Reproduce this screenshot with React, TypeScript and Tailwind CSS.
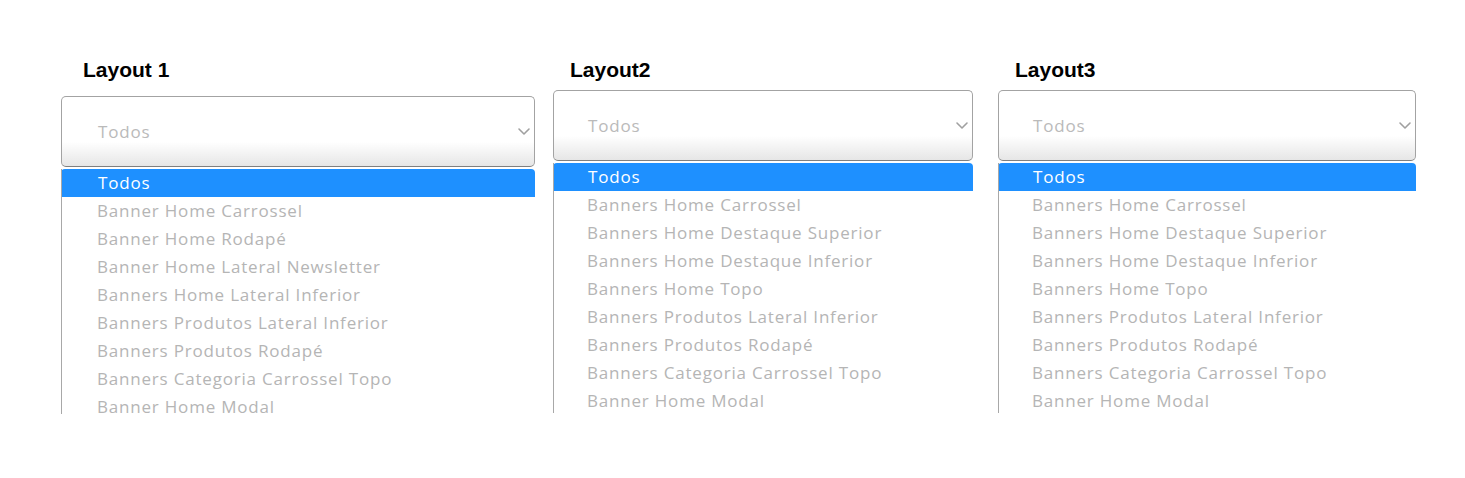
import React from "react";

const poppins = { fontFamily: '"Open Sans", "Noto Sans", sans-serif' };

type Col = {
  label: string;
  width: string;
  labelPad: string;
  boxTop: string;
  pad: string;
  items: string[];
  listH: string;
  mark?: boolean;
};

const columns: Col[] = [
  {
    label: "Layout 1",
    width: "w-[474px]",
    labelPad: "pl-[22px]",
    boxTop: "mt-[14px]",
    pad: "pl-[36px]",
    listH: "h-[245px]",
    mark: true,
    items: [
      "Banner Home Carrossel",
      "Banner Home Rodapé",
      "Banner Home Lateral Newsletter",
      "Banners Home Lateral Inferior",
      "Banners Produtos Lateral Inferior",
      "Banners Produtos Rodapé",
      "Banners Categoria Carrossel Topo",
      "Banner Home Modal",
    ],
  },
  {
    label: "Layout2",
    width: "w-[420px]",
    labelPad: "pl-[17px]",
    boxTop: "mt-[8px]",
    pad: "pl-[34px]",
    listH: "h-[250px]",
    items: [
      "Banners Home Carrossel",
      "Banners Home Destaque Superior",
      "Banners Home Destaque Inferior",
      "Banners Home Topo",
      "Banners Produtos Lateral Inferior",
      "Banners Produtos Rodapé",
      "Banners Categoria Carrossel Topo",
      "Banner Home Modal",
    ],
  },
  {
    label: "Layout3",
    width: "w-[418px]",
    labelPad: "pl-[17px]",
    boxTop: "mt-[8px]",
    pad: "pl-[34px]",
    listH: "h-[250px]",
    items: [
      "Banners Home Carrossel",
      "Banners Home Destaque Superior",
      "Banners Home Destaque Inferior",
      "Banners Home Topo",
      "Banners Produtos Lateral Inferior",
      "Banners Produtos Rodapé",
      "Banners Categoria Carrossel Topo",
      "Banner Home Modal",
    ],
  },
];

const Chevron = () => (
  <svg width="14" height="9" viewBox="0 0 14 9" fill="none" className="shrink-0">
    <path d="M2 2l5 5 5-5" stroke="#a0a0a0" strokeWidth="1.6" strokeLinecap="round" strokeLinejoin="round" />
  </svg>
);

const Dropdown = ({ col }: { col: Col }) => (
  <div className={`${col.width} shrink-0 flex flex-col`}>
    <h2
      className={`${col.labelPad} text-[21px] leading-[24px] font-bold text-black`}
      style={{ fontFamily: '"Liberation Sans", Arial, sans-serif' }}
    >
      {col.label}
    </h2>

    {/* caixa do select */}
    <div
      className={`${col.boxTop} h-[71px] flex items-center justify-between ${col.pad} pr-[3px] rounded-[5px] border border-[#a3a3a3] border-b-[#7f7f7f] bg-gradient-to-b from-white from-65% to-[#e6e6e6]`}
    >
      <span className="text-[17px] tracking-[0.8px] text-[#bababa]" style={poppins}>Todos</span>
      <Chevron />
    </div>

    {/* lista aberta */}
    <div className={`relative mt-[2px] ${col.listH} overflow-hidden border-l border-[#a8a8a8] bg-white`}>
      <div className={`h-[28px] flex items-center ${col.pad} bg-[#1e90ff] text-white rounded-tl-[4px] rounded-tr-[4px] text-[17px] tracking-[0.8px] -ml-px`} style={poppins}>
        <span className="pl-px">Todos</span>
      </div>
      {col.items.map((item) => (
        <div key={item} className={`h-[28px] flex items-center ${col.pad} text-[17px] tracking-[0.8px] text-[#b5b5b5] whitespace-nowrap`} style={poppins}>
          <span className="-ml-px">{item}</span>
        </div>
      ))}
      {col.mark && <div className="absolute -left-px top-[123px] w-px h-[56px] bg-[#3a3a3a]" />}
    </div>
  </div>
);

export default function App() {
  return (
    <div className="w-[1465px] h-[478px] bg-white flex pt-[58px] pl-[61px]">
      <Dropdown col={columns[0]} />
      <div className="w-[18px] shrink-0" />
      <Dropdown col={columns[1]} />
      <div className="w-[25px] shrink-0" />
      <Dropdown col={columns[2]} />
    </div>
  );
}
